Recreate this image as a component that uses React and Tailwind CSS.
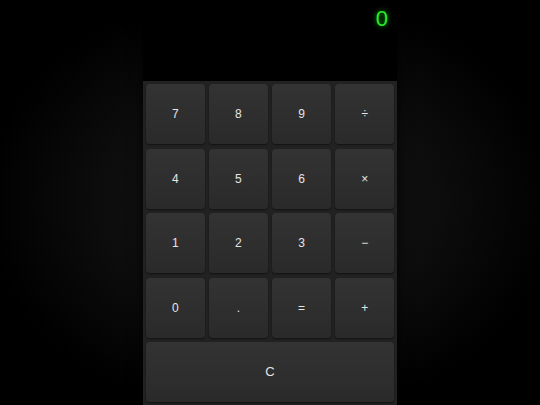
import React from 'react';

const keys = ['7', '8', '9', '÷', '4', '5', '6', '×', '1', '2', '3', '−', '0', '.', '=', '+'];

function Key({ label, wide }) {
  return (
    <button
      className={`${wide ? 'col-span-4 text-[13px]' : 'text-[12px]'} rounded-[4px] bg-gradient-to-b from-[#333333] to-[#2a2a2a] text-[#e5e5e5] shadow-[0_1px_2px_rgba(0,0,0,0.5)]`}
    >
      {label}
    </button>
  );
}

export default function App() {
  return (
    <div
      className="flex h-[405px] w-[540px] justify-center overflow-hidden bg-[radial-gradient(ellipse_at_center,#161616_0%,#0c0c0c_45%,#000000_75%)]"
      style={{ fontFamily: '"Liberation Sans", Arial, sans-serif' }}
    >
      <div className="flex w-[254px] flex-col shadow-[0_0_12px_rgba(0,0,0,0.8)]">
        <div className="flex h-[81px] justify-end bg-black pr-[9px] pt-[7px]">
          <span className="text-[22px] leading-[24px] text-[#2ee82e] [text-shadow:0_0_5px_rgba(0,255,0,0.7)]">
            0
          </span>
        </div>
        <div className="grid flex-1 grid-cols-4 grid-rows-5 gap-[4.5px] bg-[#222222] p-[3px]">
          {keys.map((k) => (
            <Key key={k} label={k} />
          ))}
          <Key label="C" wide />
        </div>
      </div>
    </div>
  );
}
